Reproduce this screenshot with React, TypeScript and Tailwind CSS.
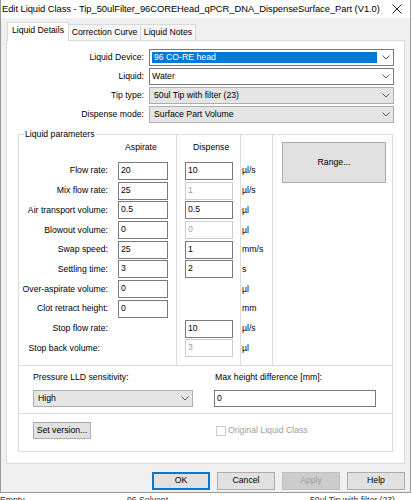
import React from "react";

type Param = {
  label: string;
  asp?: string;
  disp?: string;
  dispOff?: boolean;
  unit: string;
};

const params: Param[] = [
  { label: "Flow rate:", asp: "20", disp: "10", unit: "µl/s" },
  { label: "Mix flow rate:", asp: "25", disp: "1", dispOff: true, unit: "µl/s" },
  { label: "Air transport volume:", asp: "0.5", disp: "0.5", unit: "µl" },
  { label: "Blowout volume:", asp: "0", disp: "0", dispOff: true, unit: "µl" },
  { label: "Swap speed:", asp: "25", disp: "1", unit: "mm/s" },
  { label: "Settling time:", asp: "3", disp: "2", unit: "s" },
  { label: "Over-aspirate volume:", asp: "0", unit: "µl" },
  { label: "Clot retract height:", asp: "0", unit: "mm" },
  { label: "Stop flow rate:", disp: "10", unit: "µl/s" },
  { label: "Stop back volume:", disp: "3", dispOff: true, unit: "µl" },
];

const Chevron = () => (
  <svg width="8" height="5" viewBox="0 0 8 5" className="shrink-0">
    <path d="M0.5 0.5 L4 4 L7.5 0.5" fill="none" stroke="#5a5a5a" strokeWidth="1" />
  </svg>
);

// combo box, either editable white or read-only grey
function Combo({
  value,
  grey,
  selected,
  className,
}: {
  value: string;
  grey?: boolean;
  selected?: boolean;
  className: string;
}) {
  return (
    <div
      className={
        grey
          ? `${className} flex items-center border border-[#adadad] bg-[#e5e5e5] pl-[4px] pr-[3px]`
          : `${className} flex items-center border border-[#7a7a7a] bg-white pl-[2px] pr-[3px]`
      }
    >
      {selected ? (
        <div className="flex h-[11px] flex-1 items-center bg-[#0078d7] pl-[2px] text-white">{value}</div>
      ) : (
        <div className="flex-1">{value}</div>
      )}
      <div className="ml-[5px]">
        <Chevron />
      </div>
    </div>
  );
}

function Field({ value, off, className }: { value?: string; off?: boolean; className: string }) {
  if (value === undefined) return <div className={`${className} h-[18px]`} />;
  return (
    <div
      className={
        off
          ? `${className} h-[18px] border border-[#cccccc] bg-white pl-[2px] leading-[15px] text-[#a0a0a0]`
          : `${className} h-[18px] border border-[#7a7a7a] bg-white pl-[2px] leading-[15px]`
      }
    >
      {value}
    </div>
  );
}

function WinButton({ label, className }: { label: string; className: string }) {
  return (
    <div className={`${className} flex items-center justify-center border border-[#adadad] bg-[#e1e1e1]`}>
      {label}
    </div>
  );
}

export default function App() {
  return (
    <div className="relative h-[500px] w-[412px] overflow-hidden bg-white font-['Liberation_Sans',Arial,sans-serif] text-[8.7px] text-black">
      {/* dialog window */}
      <div className="flex h-[493px] w-[411px] flex-col border-x border-b border-[#9a9a9a] bg-[#f0f0f0]">
        <div className="flex h-[18px] items-center justify-between bg-white pl-[1px] pr-[8px]">
          <span className="whitespace-nowrap text-[9.4px] leading-none tracking-[-0.05px]">
            Edit Liquid Class - Tip_50ulFilter_96COREHead_qPCR_DNA_DispenseSurface_Part (V1.0)
          </span>
          <svg width="10" height="10" viewBox="0 0 10 10" className="shrink-0">
            <path d="M0.5 0.5 L9.5 9.5 M9.5 0.5 L0.5 9.5" stroke="#222" strokeWidth="1" />
          </svg>
        </div>

        <div className="ml-[5px] mt-[4px] flex flex-col">
          {/* tabs */}
          <div className="relative z-10 flex h-[19px] items-end">
            <div className="ml-[1px] flex h-[19px] w-[62px] items-center justify-center border-x border-t border-[#d9d9d9] bg-white pb-[2px]">
              Liquid Details
            </div>
            <div className="mb-[1px] flex h-[16px] w-[72px] items-center justify-center border-r border-t border-[#d9d9d9] bg-[#f6f6f6]">
              Correction Curve
            </div>
            <div className="mb-[1px] flex h-[16px] w-[55px] items-center justify-center border-r border-t border-[#d9d9d9] bg-[#f6f6f6]">
              Liquid Notes
            </div>
          </div>

          {/* tab page */}
          <div className="-mt-[1px] h-[424px] w-[399px] border border-[#d9d9d9] bg-white">
            <div className="mt-[8px] flex flex-col gap-[2px]">
              {[
                { label: "Liquid Device:", value: "96 CO-RE head", selected: true },
                { label: "Liquid:", value: "Water" },
                { label: "Tip type:", value: "50ul Tip with filter (23)", grey: true },
                { label: "Dispense mode:", value: "Surface Part Volume", grey: true },
              ].map((r) => (
                <div key={r.label} className="flex items-center">
                  <div className="w-[137px] text-right">{r.label}</div>
                  <Combo
                    value={r.value}
                    grey={r.grey}
                    selected={r.selected}
                    className="ml-[5px] h-[17px] w-[245px]"
                  />
                </div>
              ))}
            </div>

            {/* Liquid parameters group */}
            <div className="relative ml-[11px] mt-[11px] flex h-[318px] w-[375px] flex-col border border-[#dcdcdc]">
              <span className="absolute -top-[6px] left-[5px] bg-white px-[1px] leading-[10px]">Liquid parameters</span>

              <div className="flex h-[231px] border-b border-[#dcdcdc]">
                <div className="w-[158px] border-r border-[#dcdcdc] pt-[6px]">
                  <div className="h-[12px] pl-[106px] leading-[12px]">Aspirate</div>
                  <div className="mt-[9px] flex flex-col gap-[1.7px]">
                    {params.map((p, i) => (
                      <div key={p.label} className="flex h-[18px] items-center">
                        <div className={i === 9 ? "w-[89px] pr-[8px] text-right" : "w-[89px] text-right"}>{p.label}</div>
                        <Field value={p.asp} className="ml-[10px] w-[50px]" />
                      </div>
                    ))}
                  </div>
                </div>

                <div className="w-[64px] border-r border-[#dcdcdc] pt-[6px]">
                  <div className="h-[12px] pl-[16px] leading-[12px]">Dispense</div>
                  <div className="mt-[9px] flex flex-col gap-[1.7px]">
                    {params.map((p) => (
                      <Field key={p.label} value={p.disp} off={p.dispOff} className="ml-[8px] w-[48px]" />
                    ))}
                  </div>
                </div>

                <div className="w-[32px] border-r border-[#dcdcdc] pt-[6px]">
                  <div className="h-[12px]" />
                  <div className="mt-[9px] flex flex-col gap-[1.7px]">
                    {params.map((p) => (
                      <div key={p.label} className="flex h-[18px] items-center pl-[1px]">
                        {p.unit}
                      </div>
                    ))}
                  </div>
                </div>

                <div className="flex-1 pl-[9px] pt-[7px]">
                  <WinButton label="Range..." className="h-[41px] w-[104px]" />
                </div>
              </div>

              <div className="flex h-[48px] border-b border-[#dcdcdc] pl-[14px] pt-[6px]">
                <div className="flex w-[160px] flex-col">
                  <div className="h-[10px] leading-[10px]">Pressure LLD sensitivity:</div>
                  <Combo value="High" grey className="mt-[8px] h-[17px] w-[160px]" />
                </div>
                <div className="ml-[21px] flex flex-col">
                  <div className="h-[10px] pl-[1px] leading-[10px]">Max height difference [mm]:</div>
                  <div className="mt-[8px] h-[17px] w-[162px] border border-[#7a7a7a] bg-white pl-[2px] leading-[15px]">
                    0
                  </div>
                </div>
              </div>

              <div className="flex h-[37px] items-start pl-[14px] pt-[8px]">
                <WinButton label="Set version..." className="h-[17px] w-[58px]" />
                <div className="ml-[125px] mt-[2px] flex items-center">
                  <div className="h-[10px] w-[10px] border border-[#cccccc] bg-white" />
                  <span className="ml-[2px] text-[#a0a0a0]">Original Liquid Class</span>
                </div>
              </div>
            </div>
          </div>

          {/* dialog buttons */}
          <div className="ml-[146px] mt-[8px] flex gap-[7px]">
            <div className="flex h-[18px] w-[58px] items-center justify-center border border-[#0078d7] bg-[#e1e1e1] shadow-[inset_0_0_0_1px_#0078d7]">
              OK
            </div>
            <WinButton label="Cancel" className="h-[18px] w-[58px]" />
            <div className="flex h-[18px] w-[58px] items-center justify-center border border-[#bfbfbf] bg-[#cccccc] text-[#a0a0a0]">
              Apply
            </div>
            <WinButton label="Help" className="h-[18px] w-[58px]" />
          </div>
        </div>
      </div>

      {/* list rows of the window behind */}
      <div className="flex h-[7px] overflow-hidden pt-[2px] leading-[10px] text-[#333]">
        <span className="w-[127px]">Empty</span>
        <span className="w-[183px]">96 Solvent</span>
        <span>50ul Tip with filter (23)</span>
      </div>
    </div>
  );
}
